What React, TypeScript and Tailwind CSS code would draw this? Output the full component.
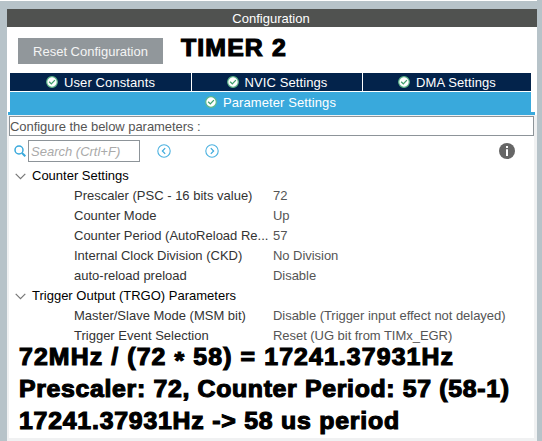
import type { ReactNode } from "react";

function Check() {
  return (
    <svg width="12" height="12" viewBox="0 0 12 12" className="shrink-0">
      <circle cx="6" cy="6" r="5.3" fill="#fff" stroke="#5fb88a" strokeWidth="1.2" />
      <path d="M3.2 5.8 5.3 7.9 8.9 4.1" fill="none" stroke="#3f9f6c" strokeWidth="1.3" />
    </svg>
  );
}

function Tab({ children, className }: { children: ReactNode; className: string }) {
  return (
    <div className={`flex items-center justify-center gap-[6px] tracking-[0.1px] text-white ${className}`}>
      <Check />
      <span className="mt-0.5">{children}</span>
    </div>
  );
}

function Arrow({ right }: { right?: boolean }) {
  return (
    <svg width="14" height="14" viewBox="0 0 14 14" className="shrink-0">
      <circle cx="7" cy="7" r="6.2" fill="none" stroke="#4db2e0" strokeWidth="1.1" />
      <path d={right ? "M5.8 4.2 8.6 7 5.8 9.8" : "M8.2 4.2 5.4 7 8.2 9.8"} fill="none" stroke="#39a9dc" strokeWidth="1.2" />
    </svg>
  );
}

function Group({ children }: { children: string }) {
  return (
    <div className="flex h-5 items-center pl-[6px] text-black">
      <svg width="11" height="7" viewBox="0 0 11 7" className="mr-[6px]">
        <path d="M.7 .8 5.5 5.6 10.3 .8" fill="none" stroke="#777" strokeWidth="1.2" />
      </svg>
      <span>{children}</span>
    </div>
  );
}

function Row({ name, value }: { name: string; value: string }) {
  return (
    <div className="flex h-5 items-center pl-[65px]">
      <span className="w-[199px] shrink-0 text-[#333]">{name}</span>
      <span className="tracking-[-0.04px] text-[#555]">{value}</span>
    </div>
  );
}

export default function App() {
  return (
    <div className="h-[441px] w-[542px] overflow-hidden whitespace-nowrap bg-[#b7c3c9] pl-[7px] pr-[5px] font-['Liberation_Sans',Arial,sans-serif] text-[13px] leading-5">
      <div className="-ml-[7px] h-px w-[537px] bg-white" />
      <div className="mt-2 flex h-[18px] items-center justify-center bg-[#505250] text-white">
        <span className="mt-0.5 pr-[2px]">Configuration</span>
      </div>
      <div className="h-[88px] bg-white pl-[3px] pr-[6px]">
        <div className="flex h-[46px] pl-2 pt-[11px]">
          <div className="flex h-[26px] w-[145px] items-center justify-center bg-[#91979b] text-[#f4f4f4]">
            <span className="mt-0.5">Reset Configuration</span>
          </div>
          <div className="ml-[18px] mt-[-4px] h-[28px] origin-left scale-x-[1.08] text-[23px] font-bold leading-[28px] tracking-[1.05px] text-black [-webkit-text-stroke:1.1px_#000]">TIMER 2</div>
        </div>
        <div className="flex h-[18px] gap-px">
          <Tab className="w-[181px] bg-[#03234b]">User Constants</Tab>
          <Tab className="w-[170px] bg-[#03234b]">NVIC Settings</Tab>
          <Tab className="w-[168px] bg-[#03234b]">DMA Settings</Tab>
        </div>
        <Tab className="mt-px h-[20px] bg-[#39a9dc]">Parameter Settings</Tab>
        <div className="-ml-[2px] h-[3px] w-[527px] bg-[#39a9dc]" />
      </div>
      <div className="h-[326px] bg-[#f0f1f2] pl-[2px] pr-[3px] pt-px">
        <div className="h-[322px] bg-white">
          <div className="flex h-[20px] items-center border border-[#8d9499] text-[#555]">
            <span className="mt-0.5 tracking-[-0.05px]">Configure the below parameters :</span>
          </div>
          <div className="flex h-[30px] items-center pl-[5px]">
            <svg width="12" height="12" viewBox="0 0 12 12" className="mr-[2px]">
              <circle cx="5" cy="5" r="4" fill="none" stroke="#39a9dc" strokeWidth="1.5" />
              <path d="m8 8 3.3 3.3" stroke="#39a9dc" strokeWidth="2" />
            </svg>
            <div className="flex h-[22px] w-[112px] items-center border border-[#8d9499] pl-[2px] italic text-[#aaa]">
              <span className="mt-0.5">Search (Crtl+F)</span>
            </div>
            <div className="ml-[17px] flex gap-[34px]">
              <Arrow />
              <Arrow right />
            </div>
            <svg width="16" height="16" viewBox="0 0 16 16" className="ml-[280px]">
              <circle cx="8" cy="8" r="8" fill="#666" />
              <path d="M7 3h2v2H7zM7 6.2h2V13H7z" fill="#fff" />
            </svg>
          </div>
          <div className="h-[175px]">
            <Group>Counter Settings</Group>
            <Row name="Prescaler (PSC - 16 bits value)" value="72" />
            <Row name="Counter Mode" value="Up" />
            <Row name="Counter Period (AutoReload Re..." value="57" />
            <Row name="Internal Clock Division (CKD)" value="No Division" />
            <Row name="auto-reload preload" value="Disable" />
            <Group>Trigger Output (TRGO) Parameters</Group>
            <Row name="Master/Slave Mode (MSM bit)" value="Disable (Trigger input effect not delayed)" />
            <Row name="Trigger Event Selection" value="Reset (UG bit from TIMx_EGR)" />
          </div>
          <div className="ml-[10px] w-[460px] origin-left scale-x-[1.08] text-[23px] font-bold leading-8 text-black [-webkit-text-stroke:1.1px_#000]">
            <div className="tracking-[1.03px]">72MHz / (72 <span className="relative top-[4px]">*</span> 58) = 17241.37931Hz</div>
            <div className="tracking-[0.62px]">Prescaler: 72, Counter Period: 57 (58-1)</div>
            <div className="tracking-[0.72px]">17241.37931Hz -&gt; 58 us period</div>
          </div>
        </div>
      </div>
    </div>
  );
}
